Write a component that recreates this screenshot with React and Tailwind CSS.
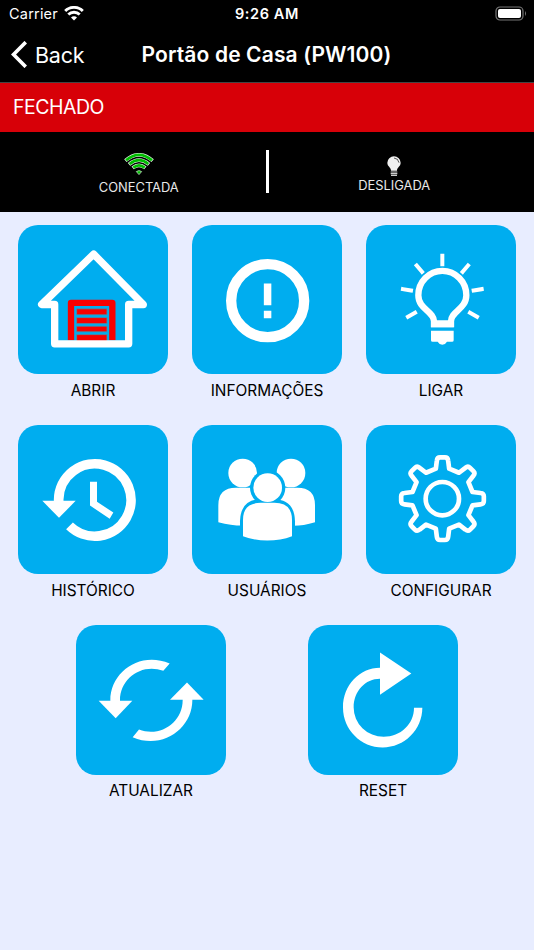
import React from "react";

function GarageIcon() {
  return (
    <>
      <path d="M183 373V261H307V373" fill="none" stroke="#f90000" strokeWidth="19" strokeLinejoin="round" />
      <g fill="#f90000" stroke="#4b8ba8" strokeWidth="2.5">
        <rect x="200" y="279" width="91" height="18" />
        <rect x="200" y="305.500" width="91" height="18" />
        <rect x="200" y="331" width="91" height="17" />
        <rect x="200" y="356.500" width="91" height="20" />
      </g>
      <path
        d="M134 266V384H356V266H400L251 115L95 266H134"
        fill="none"
        stroke="#fff"
        strokeWidth="22"
        strokeLinejoin="round"
        strokeLinecap="round"
      />
    </>
  );
}

function InfoIcon() {
  return (
    <>
      <circle cx="251" cy="254.500" r="109.500" fill="none" stroke="#fff" strokeWidth="31" />
      <path d="M239.500 203H262V268H239.500ZM239.500 285H262V307H239.500Z" />
    </>
  );
}

function BulbIcon() {
  return (
    <>
      <path
        d="M228 325V316C227 286 181 280 181 238A72 73 0 0 1 325 238C325 280 279 286 279 316V325Z"
        fill="none"
        stroke="#fff"
        strokeWidth="19"
      />
      <path d="M219 313H287V334H219ZM219 345H287V373Q287 378 282 378H267Q262 387 253 387T239 378H224Q219 378 219 373Z" />
      <path
        d="M253 120V145M176 149L192 168M330 149L314 168M135 220L159 224M371 220L347 224M150 303L171 291M357 303L336 291"
        fill="none"
        stroke="#fff"
        strokeWidth="12"
        strokeLinecap="square"
      />
    </>
  );
}

function HistoryIcon() {
  return (
    <>
      <path d="M146 256V251A108.500 108.500 0 1 1 178.500 330" fill="none" stroke="#fff" strokeWidth="29" />
      <path d="M97 255H197L147 306Z" />
      <path d="M240 198H261V258L310 290L299 309L240 269Z" />
    </>
  );
}

function UsersIcon() {
  return (
    <>
      <circle cx="176" cy="171.500" r="43" />
      <circle cx="321" cy="171.500" r="43" />
      <path d="M103 319V268Q103 216 156 216H340Q393 216 393 268V319Q350 332 315 329H181Q145 330 103 319Z" />
      <g fill="#00adef">
        <circle cx="251" cy="215.500" r="53" />
        <path d="M168 335V316Q170 250 232 250H269Q331 250 333 316V335Z" />
      </g>
      <circle cx="251" cy="215.500" r="43" />
      <path d="M177 361V312Q177 261 230 261H271Q324 261 324 312V361Q290 374 250 374T177 361Z" />
    </>
  );
}

// One tooth outline, rotated in steps of 45 degrees around the hub.
const TOOTH = [
  ["L", [-20, -90]],
  ["L", [-17, -114]],
  ["Q", [-16, -124], [-7, -124]],
  ["L", [7, -124]],
  ["Q", [16, -124], [17, -114]],
  ["L", [20, -90]],
];

function gearPath(cx, cy) {
  let d = "";
  for (let i = 0; i < 8; i++) {
    const a = (i * Math.PI) / 4;
    for (const [cmd, ...points] of TOOTH) {
      const coords = points.map(([x, y]) => {
        const px = cx + x * Math.cos(a) - y * Math.sin(a);
        const py = cy + x * Math.sin(a) + y * Math.cos(a);
        return `${px.toFixed(1)} ${py.toFixed(1)}`;
      });
      d += (d === "" ? "M" : cmd) + coords.join(" ");
    }
  }
  return d + "Z";
}

function GearIcon() {
  return (
    <g fill="none" stroke="#fff" strokeWidth="14" strokeLinejoin="round">
      <path d={gearPath(253.5, 248.5)} />
      <circle cx="253" cy="248.500" r="50" />
    </g>
  );
}

function RefreshIcon() {
  return (
    <>
      <path d="M127 258V253C127 170 215 104 305 143L286 165C222 141 156 187 156 253V258Z" />
      <path d="M92 255H193L143 307Z" />
      <path d="M373 248V253C373 336 285 403 194 364L213 341C278 366 344 318 344 253V248Z" />
      <path d="M306 252H407L357 200Z" />
    </>
  );
}

function ResetIcon() {
  return (
    <path d="M240 110L334 173L240 237V189C196 189 161 226 161 275A91 88 0 0 0 251 363C302 363 342 325 342 276H367C367 342 313 395 248 395S129 342 129 275S179 156 240 156Z" />
  );
}

function Tile({ label, icon }) {
  return (
    <button className="flex w-[150px] flex-col items-center">
      <span className="block h-[149.500px] w-[150px] rounded-[20px] bg-[#00adef]">
        <svg viewBox="24 27.5 450 450" className="h-[150px] w-[150px]" fill="#fff">
          {icon}
        </svg>
      </span>
      <span className="mt-[5.900px] block h-[21.600px] whitespace-nowrap text-[15.400px] leading-[22px] text-black">{label}</span>
    </button>
  );
}

function StatusWifi() {
  return (
    <svg viewBox="0 0 20 15" className="-mt-0.5 h-[15px] w-5" fill="none" stroke="#fff">
      <path d="M1.200 5A12.600 12.600 0 0 1 18.800 5" strokeWidth="2.900" />
      <path d="M4.300 8.500A8.200 8.200 0 0 1 15.700 8.500" strokeWidth="2.900" />
      <path d="M10 14.500L7 11.500A4.200 4.200 0 0 1 13 11.500Z" fill="#fff" stroke="none" />
    </svg>
  );
}

function SignalIcon() {
  return (
    <svg viewBox="0 0 90 68" className="h-[22.600px] w-[30px]" fill="none">
      <g stroke="#e9f5e9" strokeWidth="11">
        <path d="M4 23Q45-12 86 23M15 34Q45 9 75 34M26 45Q45 29 64 45" />
      </g>
      <g stroke="#00bd00" strokeWidth="8">
        <path d="M6 22Q45-11 84 22M17 33Q45 10 73 33M28 44Q45 30 62 44" />
      </g>
      <path d="M37 56Q45 50 53 56L45 65Z" fill="#00bd00" stroke="#e9f5e9" strokeWidth="2" />
    </svg>
  );
}

function LampIcon() {
  return (
    <svg viewBox="0 0 42 62" className="h-[20.700px] w-[14px]">
      <path d="M12 44C12 33 1 32 1 20A20 19 0 0 1 41 20C41 32 30 33 30 44Z" fill="#efefef" />
      <path d="M21 6Q34 7 36 20" fill="none" stroke="#333" strokeWidth="2.500" />
      <path d="M11 48H31M11 53H31M12 58H30" stroke="#ccc" strokeWidth="3.500" />
    </svg>
  );
}

export default function App() {
  return (
    <div className="flex h-[950px] w-[534px] flex-col overflow-hidden bg-[#e8edff] font-['Inter','Liberation_Sans',sans-serif]">
      <div className="grid h-7 shrink-0 grid-cols-3 items-center bg-black text-white">
        <div className="flex items-center gap-[6px] pl-[9px]">
          <span className="text-[14.500px] leading-7 tracking-[0.200px]">Carrier</span>
          <StatusWifi />
        </div>
        <div className="text-center text-[14.500px] font-semibold leading-7 tracking-[0.600px]">9:26 AM</div>
        <div className="flex items-center justify-end pr-[7px]">
          <svg viewBox="0 0 32 15" className="-mt-0.5 h-[15px] w-8">
            <rect x="1" y="1" width="27" height="13" rx="4" fill="none" stroke="#777" strokeWidth="1.200" />
            <rect x="3" y="3" width="23" height="9" rx="2" fill="#fff" />
            <path d="M30 5Q32 7.500 30 10Z" fill="#777" />
          </svg>
        </div>
      </div>

      <div className="grid h-[55px] shrink-0 grid-cols-[130px_1fr_130px] items-center border-b border-[#444] bg-black text-white">
        <button className="flex items-center gap-2 pl-[11px]">
          <svg viewBox="0 0 16 27" className="-mt-0.5 h-[27px] w-4" fill="none" stroke="#fff" strokeWidth="3.700">
            <path d="M14.800 1.200L2.500 13.500L14.800 25.800" />
          </svg>
          <span className="-mt-px text-[21.500px] leading-7 tracking-[-0.200px]">Back</span>
        </button>
        <h1 className="-ml-px whitespace-nowrap text-center text-[21px] font-semibold leading-7 tracking-[0.130px]">Portão de Casa (PW100)</h1>
      </div>

      <div className="flex h-[49px] shrink-0 items-center bg-[#d70008] pl-[13px] text-[19.500px] tracking-[-0.500px] text-white">FECHADO</div>

      <div className="grid h-[79.500px] shrink-0 grid-cols-[1fr_3px_1fr] bg-black text-[12.900px] text-[#e8e8e8]">
        <div className="flex flex-col items-center pl-[12px] pt-[21px]">
          <SignalIcon />
          <span className="mt-[3px] leading-[18px]">CONECTADA</span>
        </div>
        <div className="mt-[18px] h-[43px] bg-white" />
        <div className="flex flex-col items-center pr-[14px] pt-[24px]">
          <LampIcon />
          <span className="leading-[18px]">DESLIGADA</span>
        </div>
      </div>

      <main className="flex flex-col gap-[23.300px] pt-[13px]">
        <div className="flex justify-center gap-6">
          <Tile label="ABRIR" icon={<GarageIcon />} />
          <Tile label="INFORMAÇÕES" icon={<InfoIcon />} />
          <Tile label="LIGAR" icon={<BulbIcon />} />
        </div>
        <div className="flex justify-center gap-6">
          <Tile label="HISTÓRICO" icon={<HistoryIcon />} />
          <Tile label="USUÁRIOS" icon={<UsersIcon />} />
          <Tile label="CONFIGURAR" icon={<GearIcon />} />
        </div>
        <div className="flex justify-center gap-[82px]">
          <Tile label="ATUALIZAR" icon={<RefreshIcon />} />
          <Tile label="RESET" icon={<ResetIcon />} />
        </div>
      </main>
    </div>
  );
}
